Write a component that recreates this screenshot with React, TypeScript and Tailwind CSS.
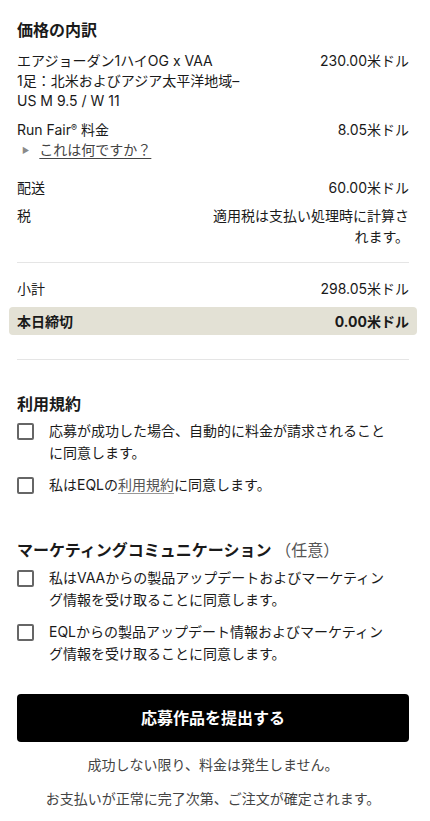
import React from "react";

const font = { fontFamily: '"Inter", "Noto Sans CJK JP", sans-serif' };

function Checkbox() {
  return <div className="mt-[3px] h-[17px] w-[17px] shrink-0 rounded-[2px] border-2 border-[#666666] bg-white" />;
}

function CheckRow({ children }: { children: React.ReactNode }) {
  return (
    <div className="flex items-start gap-[15px]">
      <Checkbox />
      <div className="w-[340px] text-[14px] leading-[22px] text-[#1a1a1a]">{children}</div>
    </div>
  );
}

export default function App() {
  return (
    <div className="min-h-[821px] w-[430px] bg-white px-[17px] pt-[18px] pb-[10px] text-[#1a1a1a] pr-[21px]" style={font}>
      <h2 className="text-[16px] font-bold leading-[24px]">価格の内訳</h2>

      <div className="mt-[9px] flex justify-between text-[14px] leading-[20px]">
        <div>
          エアジョーダン1ハイOG x VAA
          <br />
          1足：北米およびアジア太平洋地域–
          <br />
          US M 9.5 / W 11
        </div>
        <div className="whitespace-nowrap">230.00米ドル</div>
      </div>

      <div className="mt-[9px] flex h-[20px] justify-between text-[14px] leading-[20px]">
        <div>
          Run Fair<span className="relative -top-[4px] align-baseline text-[9px] leading-none">®</span> 料金
        </div>
        <div>8.05米ドル</div>
      </div>
      <div className="flex h-[20px] items-center text-[14px] leading-[20px] text-[#444444]">
        <span className="ml-[5px] mr-[10px] text-[8px] leading-none text-[#8a8a8a]">▶</span>
        <span className="underline underline-offset-[3px]">これは何ですか？</span>
      </div>

      <div className="mt-[18px] flex justify-between text-[14px] leading-[20px]">
        <div>配送</div>
        <div>60.00米ドル</div>
      </div>

      <div className="mt-[7px] flex justify-between text-[14px] leading-[21px]">
        <div>税</div>
        <div className="w-[200px] text-right">適用税は支払い処理時に計算されます。</div>
      </div>

      <div className="mt-[15px] h-px bg-[#e5e5e5]" />

      <div className="mt-[16px] flex justify-between text-[14px] leading-[20px]">
        <div>小計</div>
        <div>298.05米ドル</div>
      </div>

      <div className="-mx-[8px] mt-[8px] flex h-[28px] items-center justify-between rounded-[4px] bg-[#e3e1d5] px-[8px] text-[14px] font-bold">
        <div>本日締切</div>
        <div>0.00米ドル</div>
      </div>

      <div className="mt-[24px] h-px bg-[#e5e5e5]" />

      <h2 className="mt-[32px] text-[16px] font-bold leading-[24px]">利用規約</h2>
      <div className="mt-[4px] flex flex-col gap-[10px]">
        <CheckRow>応募が成功した場合、自動的に料金が請求されることに同意します。</CheckRow>
        <CheckRow>
          私はEQLの<span className="text-[#555555] underline decoration-[#999999] underline-offset-[3px]">利用規約</span>に同意します。
        </CheckRow>
      </div>

      <h2 className="mt-[42px] text-[16px] font-bold leading-[24px]">
        マーケティングコミュニケーション <span className="font-normal text-[#555555]">（任意）</span>
      </h2>
      <div className="mt-[5px] flex flex-col gap-[10px]">
        <CheckRow>私はVAAからの製品アップデートおよびマーケティング情報を受け取ることに同意します。</CheckRow>
        <CheckRow>EQLからの製品アップデート情報およびマーケティング情報を受け取ることに同意します。</CheckRow>
      </div>

      <button className="mt-[29px] flex h-[48px] w-full items-center justify-center rounded-[4px] bg-black text-[16px] font-bold text-white">
        応募作品を提出する
      </button>

      <p className="mt-[13px] text-center text-[14px] leading-[20px] text-[#444444]">成功しない限り、料金は発生しません。</p>
      <p className="mt-[14px] text-center text-[14px] leading-[20px] text-[#444444]">お支払いが正常に完了次第、ご注文が確定されます。</p>
    </div>
  );
}
